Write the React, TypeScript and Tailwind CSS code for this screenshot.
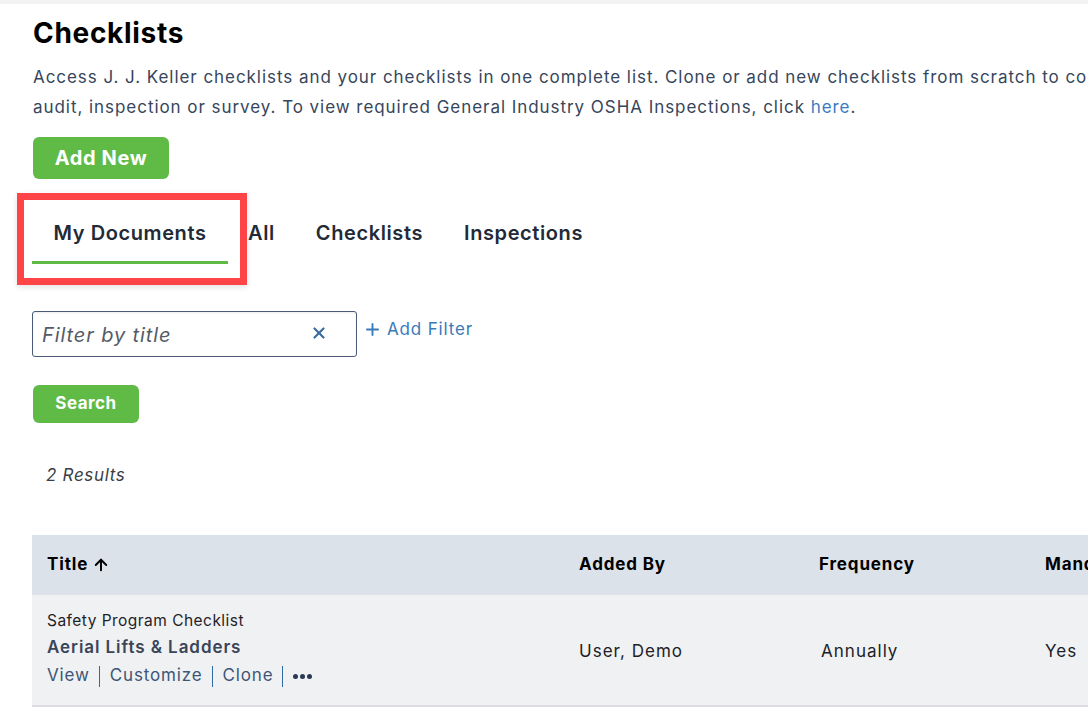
import { X, Plus, ArrowUp } from "lucide-react";

const tabs = ["My Documents", "All", "Checklists", "Inspections"];

function ActionLinks() {
  const items = ["View", "Customize", "Clone"];
  return (
    <div className="flex items-center text-[17px] text-[#3d5676] tracking-[0.05em]">
      {items.map((label) => (
        <span key={label} className="flex items-center">
          <span>{label}</span>
          <span className="ml-[9px] mr-[10px] h-[21px] w-px bg-[#2f6aa5]" />
        </span>
      ))}
      <span className="flex items-center gap-[2px]">
        <span className="h-[5px] w-[5px] rounded-full bg-[#2a3a55]" />
        <span className="h-[5px] w-[5px] rounded-full bg-[#2a3a55]" />
        <span className="h-[5px] w-[5px] rounded-full bg-[#2a3a55]" />
      </span>
    </div>
  );
}

export default function App() {
  return (
    <div className="w-[1088px] h-[709px] overflow-hidden bg-white font-['Inter',sans-serif] text-[#1d2433]">
      <div className="h-[4px] bg-[#f3f3f3]" />
      <div className="w-[1400px] pl-[33px] pt-[12px]">
        <h1 className="text-[28px] leading-[34px] font-bold text-black tracking-[0.025em]">
          Checklists
        </h1>
        <p className="mt-[12px] text-[17px] leading-[30px] tracking-[0.95px] text-[#36465c]">
          Access J. J. Keller checklists and your checklists in one complete list. Clone or add new checklists from
          scratch to complete an
          <br />
          audit, inspection or survey. To view required General Industry OSHA Inspections, click{" "}
          <a className="text-[#3a7bbf]">here</a>.
        </p>

        <button className="mt-[15px] h-[42px] w-[136px] rounded-[6px] bg-[#5fbb46] text-[20px] font-bold text-white tracking-[0.03em]">
          Add New
        </button>

        {/* tab strip */}
        <div className="relative mt-[14px] -ml-[1px] flex h-[92px] items-stretch">
          <div className="pointer-events-none absolute -left-[15px] top-0 h-[92px] w-[230px] border-[7px] border-[#ff4447] shadow-[0_2px_6px_rgba(0,0,0,0.12)]" />
          {tabs.map((t, i) => (
            <div
              key={t}
              className={
                "flex flex-col justify-center " +
                (i === 0 ? "w-[196px] items-center" : i === 1 ? "ml-[20px] pr-[41px]" : "pr-[41px]")
              }
            >
              <div className="relative flex h-full items-center pb-[12px]">
                <span className="text-[20px] font-semibold tracking-[0.03em] text-[#222a38]">{t}</span>
              </div>
            </div>
          ))}
          <div className="absolute left-0 top-[68px] h-[3px] w-[196px] bg-[#5fbb46]" />
        </div>

        {/* filter */}
        <div className="mt-[26px] flex items-start">
          <div className="flex h-[46px] w-[325px] items-center rounded-[3px] border border-[#4a5a78] pl-[9px] pr-[28px] -ml-[1px] shadow-[inset_0_1px_2px_rgba(0,0,0,0.08)]">
            <span className="flex-1 pt-[2px] text-[20px] italic tracking-[0.045em] text-[#555b66]">Filter by title</span>
            <X size={18} strokeWidth={3} className="text-[#3d6e9e] -mt-[2px]" />
          </div>
          <div className="ml-[6px] mt-[6px] flex items-center gap-[5px] text-[17px] tracking-[0.05em] text-[#3a7ab8]">
            <Plus size={19} strokeWidth={2.4} />
            <span>Add Filter</span>
          </div>
        </div>

        <button className="mt-[28px] h-[38px] w-[106px] rounded-[6px] bg-[#5fbb46] text-[17px] font-bold text-white tracking-[0.03em]">
          Search
        </button>

        <div className="mt-[40px] pl-[13px] text-[17px] italic tracking-[0.04em] text-[#3a3f47]">2 Results</div>

        {/* results table */}
        <table className="mt-[46px] -ml-[1px] w-[1200px] border-collapse text-left">
          <thead>
            <tr className="h-[60px] bg-[#dce2ea] text-[17px] font-bold text-black tracking-[0.05em]">
              <th className="w-[533px] pl-[15px] font-bold">
                <span className="flex items-center gap-[4px]">
                  Title <ArrowUp size={18} strokeWidth={2.6} />
                </span>
              </th>
              <th className="w-[240px] pl-[14px] font-bold">Added By</th>
              <th className="w-[226px] pl-[14px] font-bold">Frequency</th>
              <th className="pl-[14px] font-bold">Mandatory</th>
            </tr>
          </thead>
          <tbody>
            <tr className="h-[111px] border-b-2 border-[#dcdde0] bg-[#f0f1f3] text-[17px] tracking-[0.06em] text-[#1d2128]">
              <td className="pl-[15px] align-middle">
                <div className="text-[15.5px] leading-[22px] tracking-[0.03em] text-[#1f2329]">Safety Program Checklist</div>
                <div className="mt-[2px] text-[17px] font-semibold leading-[26px] text-[#3a4558] tracking-[0.055em]">
                  Aerial Lifts &amp; Ladders
                </div>
                <div className="mt-[3px]">
                  <ActionLinks />
                </div>
              </td>
              <td className="pl-[14px] pt-[4px]">User, Demo</td>
              <td className="pl-[16px] pt-[4px]">Annually</td>
              <td className="pl-[14px] pt-[4px]">Yes</td>
            </tr>
          </tbody>
        </table>
      </div>
    </div>
  );
}
